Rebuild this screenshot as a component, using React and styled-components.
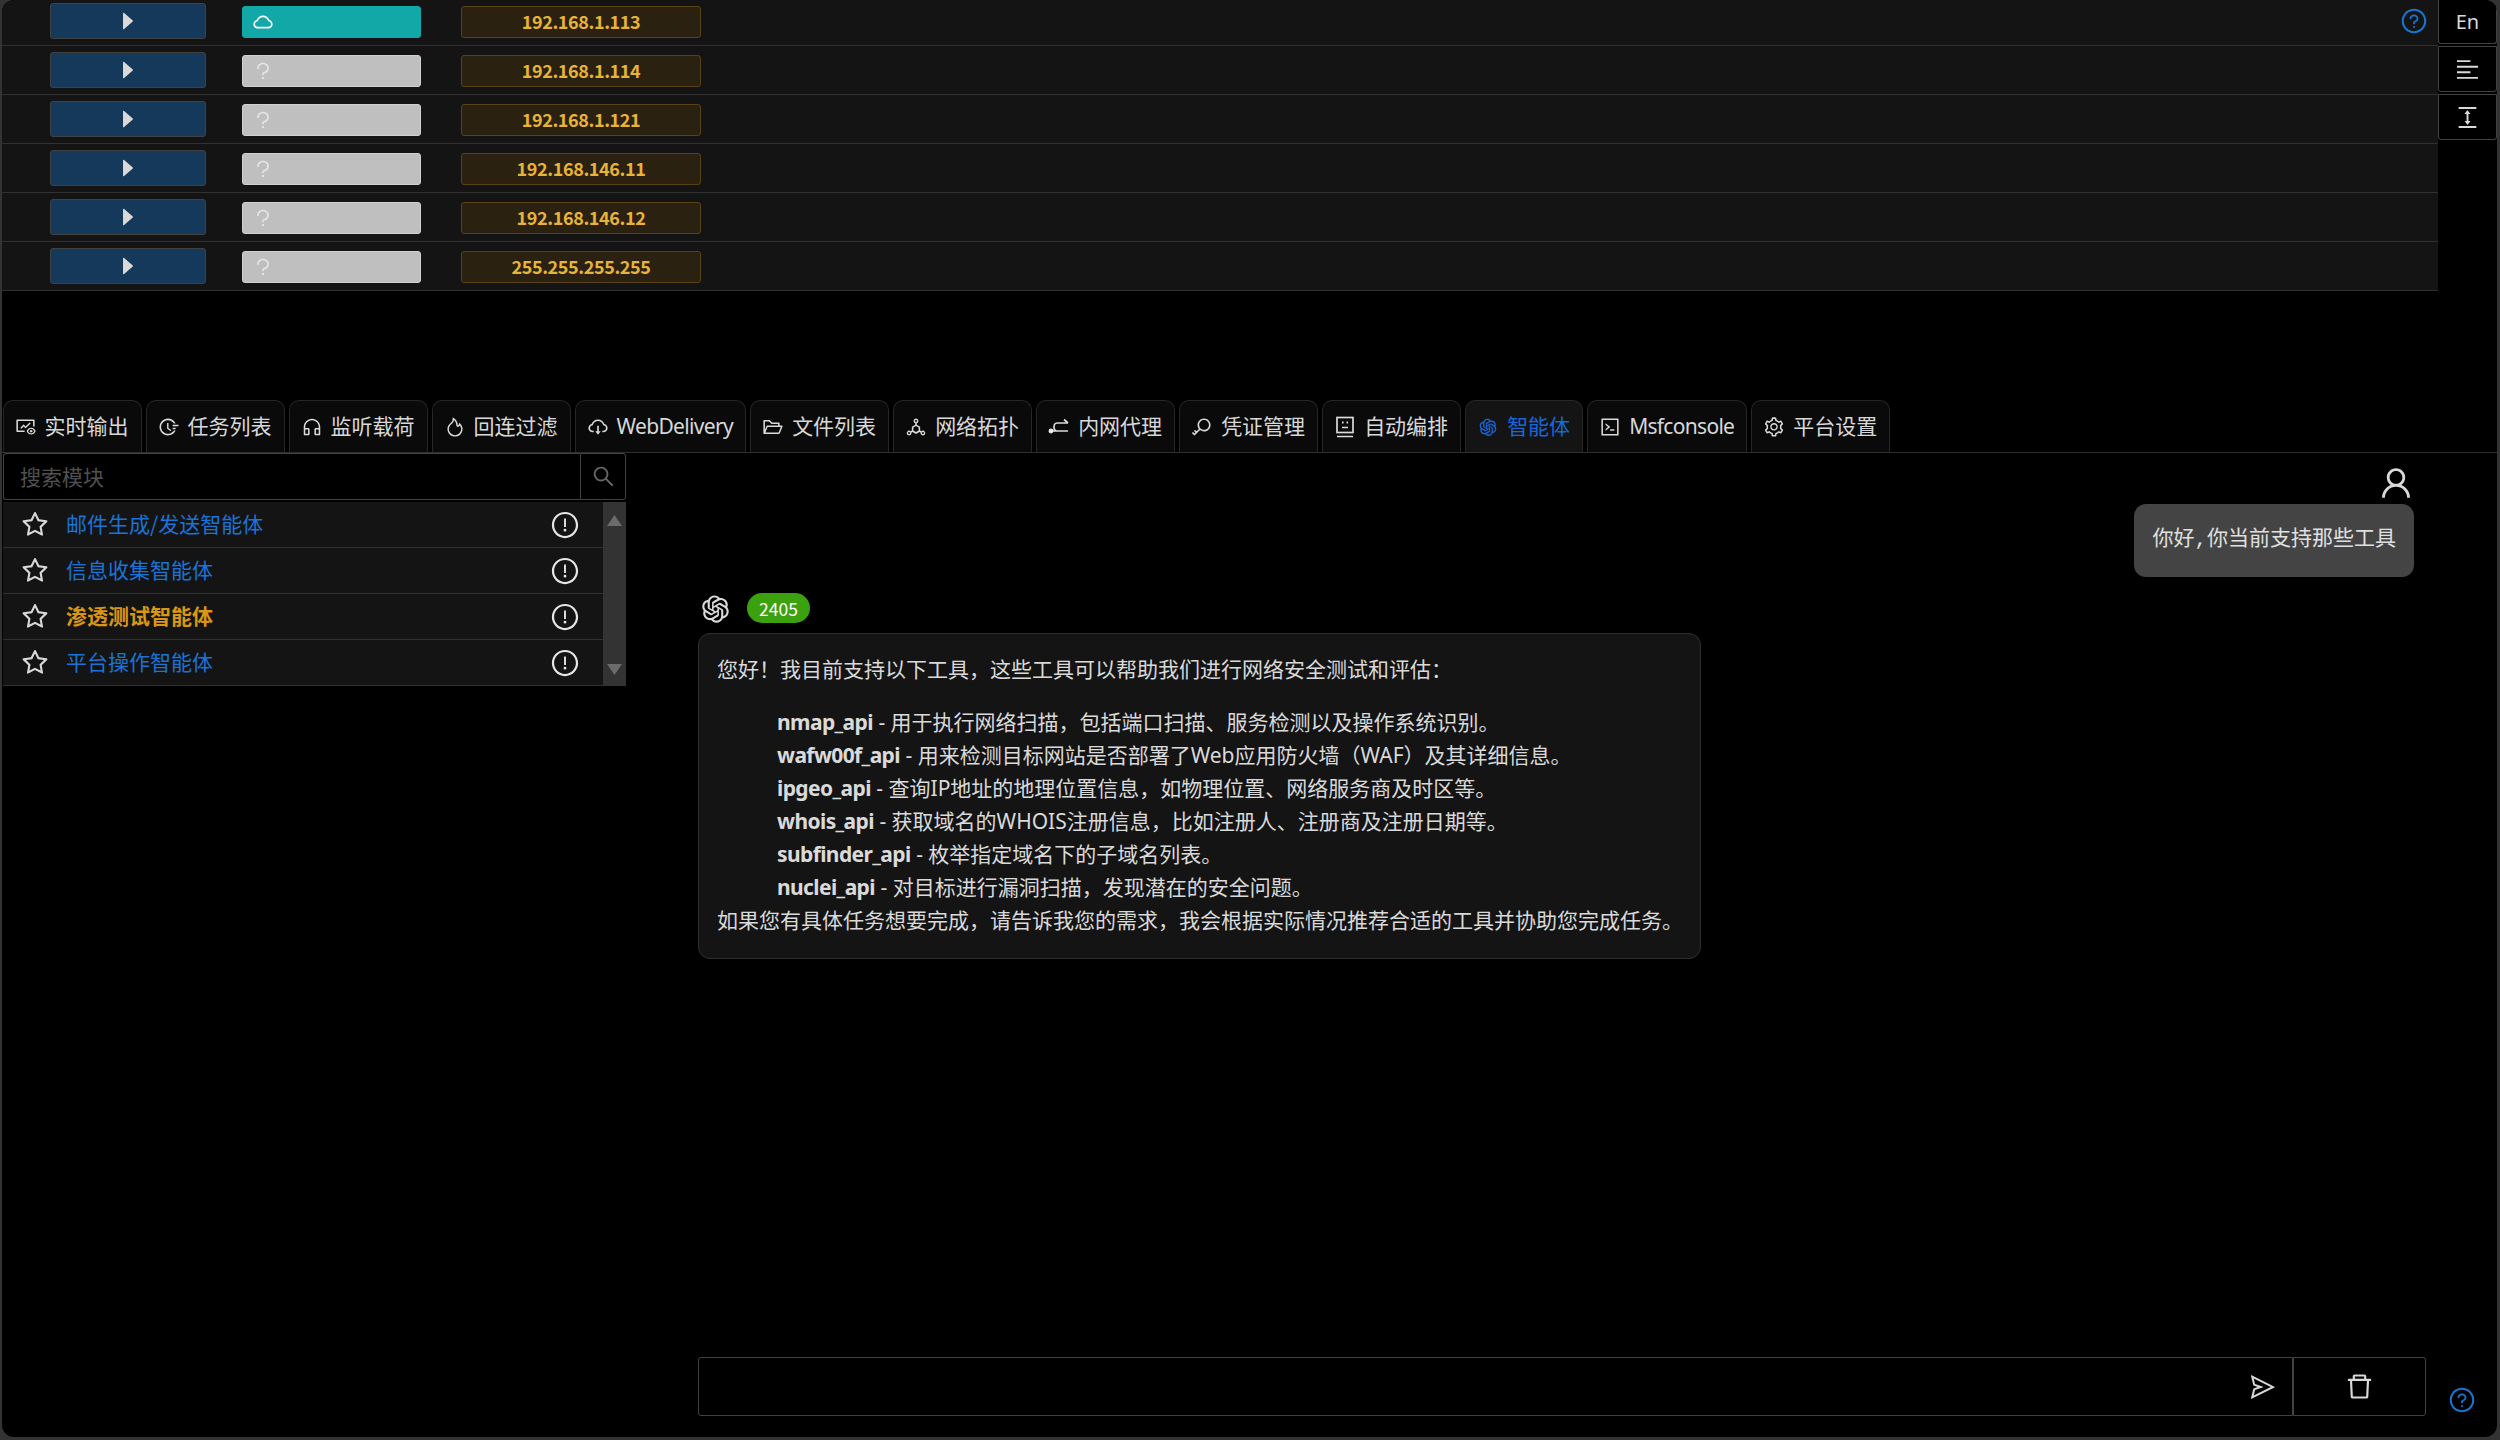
import React from "react";
import styled, { createGlobalStyle } from "styled-components";
import {
  AiOutlineFundView, AiOutlineFieldTime, AiOutlineCustomerService, AiOutlineFire,
  AiOutlineCloudDownload, AiOutlineFolderOpen, AiOutlineDeploymentUnit, AiOutlineKey,
  AiOutlineOpenAI, AiOutlineCode, AiOutlineSetting, AiOutlineAlignLeft, AiOutlineColumnHeight,
  AiOutlineUser, AiOutlineDelete, AiOutlineSend, AiOutlineQuestionCircle,
  AiOutlineExclamationCircle, AiOutlineStar, AiOutlineSearch, AiFillCaretRight,
  AiOutlineCloud, AiOutlineQuestion,
} from "react-icons/ai";

const FONT = `"Noto Sans", "Noto Sans CJK SC", sans-serif`;

const Global = createGlobalStyle`
  html, body { margin: 0; padding: 0; background: #333; height: 1440px; overflow: hidden; }
  * { box-sizing: border-box; }
`;

const Frame = styled.div`
  width: 2500px; height: 1440px; background: #333;
  padding: 0 3px 3px 2px; font-family: ${FONT}; color: rgba(255,255,255,.85);
`;
const Window = styled.div`
  width: 100%; height: 100%; background: #000; border-radius: 12px; overflow: hidden;
  display: flex; flex-direction: column;
`;
const Top = styled.div`
  height: 400px; flex: none; display: flex; align-items: flex-start; overflow: hidden;
`;
const HostTable = styled.div`
  width: 2436px; flex: none; margin-top: -3px;
`;
const HostRow = styled.div`
  height: 49px; display: flex; align-items: center; background: #141414;
  border-bottom: 1px solid #303030;
`;
const ExpandButton = styled.div`
  width: 156px; height: 36px; margin-left: 48px; flex: none;
  display: flex; align-items: center; justify-content: center;
  background: #15395b; border: 1px solid #424242; border-radius: 3px; color: #d9d9d9; font-size: 24px;
`;
const StatusTag = styled.div`
  width: 179px; height: 32px; margin: 1px 0 0 36px; flex: none; display: flex; align-items: center;
  padding-left: 9px; border-radius: 3px; font-size: 22px;
  background: ${p => (p.$online ? "#13a8a8" : "#bfbfbf")};
  color: ${p => (p.$online ? "#fff" : "#e6e6e6")};
  border: 1px solid ${p => (p.$online ? "#13a8a8" : "#d0d0d0")};
`;
const IpTag = styled.div`
  width: 240px; height: 32px; margin: 1px 0 0 40px; padding-bottom: 2px; flex: none; display: flex; align-items: center;
  justify-content: center; background: #2b2111; border: 1px solid #594214; border-radius: 3px;
  color: #e8b339; font-size: 18px; font-weight: 700; letter-spacing: -0.4px;
  font-family: "Noto Sans CJK SC", sans-serif;
`;
const HelpIcon = styled.span`
  display: flex; color: #1677d2; font-size: ${p => p.$size || 28}px;
`;
const TopHelp = styled(HelpIcon)`
  margin-left: auto; margin-right: 10px;
`;
const SideColumn = styled.div`
  width: 59px; flex: none; display: flex; flex-direction: column; gap: 2px;
`;
const SideButton = styled.div`
  height: ${p => p.$h}px; display: flex; align-items: center; justify-content: center;
  background: #000; border: 1px solid #424242; border-top: ${p => (p.$first ? "none" : "1px solid #424242")};
  border-radius: 0 0 3px 3px; color: #d9d9d9; font-size: 27px;
`;
const LangText = styled.span`
  font-size: 20px; font-family: "Noto Sans", sans-serif;
`;
const TabBar = styled.div`
  height: 53px; flex: none; display: flex; gap: 4px; padding-left: 0.5px; border-bottom: 1px solid #303030;
`;
const Tab = styled.div`
  height: 52px; display: flex; align-items: center; gap: 8px; padding: 0 12px 0 11px;
  background: ${p => (p.$active ? "#141414" : "#0a0a0a")};
  border: 1px solid #262626; border-bottom: none; border-radius: 10px 10px 0 0;
  font-size: 21px; line-height: 33px; white-space: nowrap;
  letter-spacing: ${p => p.$tracking || 0}px;
  color: ${p => (p.$active ? "#1668dc" : "rgba(255,255,255,.85)")};
  svg { font-size: 22px; flex: none; }
`;
const Body = styled.div`
  flex: 1; min-height: 0; display: flex;
`;
const Sidebar = styled.div`
  width: 624px; flex: none; padding-left: 1px;
`;
const SearchBar = styled.div`
  height: 47px; display: flex;
`;
const SearchInput = styled.input`
  flex: 1; min-width: 0; height: 47px; background: #000; border: 1px solid #424242; border-right: none;
  border-radius: 3px 0 0 3px; padding: 0 16px 2px; outline: none; color: #fff;
  font-family: "Noto Sans CJK SC", sans-serif; font-size: 21px;
  &::placeholder { color: #505050; opacity: 1; }
`;
const SearchButton = styled.div`
  width: 46px; height: 47px; flex: none; display: flex; align-items: center; justify-content: center;
  border: 1px solid #424242; border-radius: 0 3px 3px 0; color: #666; font-size: 25px;
`;
const ModuleList = styled.div`
  margin-top: 2px; display: flex; height: 184px; background: #141414;
`;
const ModuleRows = styled.div`
  flex: 1; min-width: 0;
`;
const ModuleRow = styled.div`
  height: 46px; display: flex; align-items: center; padding: 0 23px 0 17px;
  border-bottom: 1px solid #303030;
`;
const StarIcon = styled.span`
  display: flex; font-size: 30px; color: #d9d9d9;
`;
const ModuleName = styled.span`
  margin-left: 16px; padding-bottom: 3px; flex: 1; font-size: 21px; font-family: "Noto Sans CJK SC", sans-serif;
  font-weight: ${p => (p.$hot ? 700 : 400)};
  color: ${p => (p.$hot ? "#d89614" : "#1a73d6")};
`;
const InfoIcon = styled.span`
  display: flex; font-size: 30px; color: #e6e6e6;
`;
const ScrollTrack = styled.div`
  width: 23px; flex: none; background: #333; display: flex; flex-direction: column;
  justify-content: space-between; align-items: center; padding: 13px 0 11px;
`;
const Chat = styled.div`
  flex: 1; min-width: 0; padding: 0 0 21px 72px; display: flex; flex-direction: column;
`;
const UserMessage = styled.div`
  margin-top: 11px; padding-right: 83px; display: flex; flex-direction: column; align-items: flex-end;
`;
const UserAvatar = styled.span`
  display: flex; font-size: 38px; height: 40px; margin-right: -1px; color: #d9d9d9;
`;
const UserBubble = styled.div`
  height: 73px; padding: 19px 18px; background: #444; border-radius: 12px;
  font-family: "Liberation Mono", "Noto Sans CJK SC", monospace; font-size: 21px; line-height: 33px;
  color: #e0e0e0; white-space: nowrap;
`;
const BotHeader = styled.div`
  margin-top: 15px; display: flex; align-items: center; gap: 14px; height: 32px;
`;
const BotLogo = styled.span`
  display: flex; font-size: 35px; color: #d9d9d9;
`;
const CountBadge = styled.span`
  width: 63px; height: 30px; display: flex; align-items: center; justify-content: center;
  background: #3ba10f; border-radius: 15px; color: #fff; font-size: 17.5px;
  font-family: "Noto Sans CJK SC", sans-serif;
`;
const Card = styled.div`
  width: 1003px; margin-top: 9px; padding: 19px 18px 21px; background: #141414; border: 1px solid #303030;
  border-radius: 12px; font-size: 21px; line-height: 33px; white-space: nowrap;
`;
const Paragraph = styled.div``;
const ToolList = styled.ul`
  list-style: none; margin: 20px 0 0; padding: 0 0 0 60px;
`;
const ToolName = styled.strong`
  font-weight: 700; letter-spacing: -0.6px;
`;
const Composer = styled.div`
  margin-top: auto; display: flex; height: 59px;
`;
const ComposerInput = styled.div`
  flex: 1; min-width: 0; display: flex; align-items: center; justify-content: flex-end; padding-right: 15px;
  border: 1px solid #424242; border-radius: 3px 0 0 3px; color: #d9d9d9; font-size: 28px;
`;
const ClearButton = styled.div`
  width: 133px; flex: none; display: flex; align-items: center; justify-content: center;
  border: 1px solid #424242; border-radius: 0 3px 3px 0; color: #d9d9d9; font-size: 31px;
`;
const BottomHelp = styled(HelpIcon)`
  align-self: flex-end; margin: 0 21px 2px 22px;
`;

const ProxyIcon = () => (
  <svg width="1em" height="1em" viewBox="0 0 22 22" fill="none" stroke="currentColor" strokeWidth="1.7">
    <path d="M9 7h11M16 3.5 20 7M3 15h17M9 7c-2 0-3 2-3 4s1 4 3 4" />
    <circle cx="3" cy="15" r="1.6" fill="currentColor" />
  </svg>
);
const BoardIcon = () => (
  <svg width="1em" height="1em" viewBox="0 0 22 22" fill="none" stroke="currentColor" strokeWidth="1.7">
    <rect x="3" y="1.5" width="16" height="15" />
    <path d="M3 20.5h16M8 11.5h6" />
    <path d="M8 6.5h1.6M12.5 6.5h1.6" strokeWidth="2" />
  </svg>
);
const ArrowUp = () => (
  <svg width="15" height="11" viewBox="0 0 15 11"><polygon points="7.5,0 15,11 0,11" fill="#6b6b6b" /></svg>
);
const ArrowDown = () => (
  <svg width="15" height="11" viewBox="0 0 15 11"><polygon points="0,0 15,0 7.5,11" fill="#6b6b6b" /></svg>
);

const hosts = ["192.168.1.113", "192.168.1.114", "192.168.1.121", "192.168.146.11", "192.168.146.12", "255.255.255.255"];
const tabs = [
  { Icon: AiOutlineFundView, label: "实时输出" }, { Icon: AiOutlineFieldTime, label: "任务列表" },
  { Icon: AiOutlineCustomerService, label: "监听载荷" }, { Icon: AiOutlineFire, label: "回连过滤" },
  { Icon: AiOutlineCloudDownload, label: "WebDelivery", tracking: -0.65 }, { Icon: AiOutlineFolderOpen, label: "文件列表" },
  { Icon: AiOutlineDeploymentUnit, label: "网络拓扑" }, { Icon: ProxyIcon, label: "内网代理" },
  { Icon: AiOutlineKey, label: "凭证管理" }, { Icon: BoardIcon, label: "自动编排" },
  { Icon: AiOutlineOpenAI, label: "智能体", active: true }, { Icon: AiOutlineCode, label: "Msfconsole", tracking: -0.7 },
  { Icon: AiOutlineSetting, label: "平台设置" },
];
const modules = [["邮件生成/发送智能体"], ["信息收集智能体"], ["渗透测试智能体", true], ["平台操作智能体"]];

// Full-width CJK punctuation, written as escapes so it stays distinct from the ASCII forms.
const C = "\uFF0C";
const E = "\uFF01";
const K = "\uFF1A";
const LP = "\uFF08";
const RP = "\uFF09";

const intro = `您好${E}我目前支持以下工具${C}这些工具可以帮助我们进行网络安全测试和评估${K}`;
const outro = `如果您有具体任务想要完成${C}请告诉我您的需求${C}我会根据实际情况推荐合适的工具并协助您完成任务。`;
const tools = [
  ["nmap_api", ` - 用于执行网络扫描${C}包括端口扫描、服务检测以及操作系统识别。`],
  ["wafw00f_api", ` - 用来检测目标网站是否部署了Web应用防火墙${LP}WAF${RP}及其详细信息。`],
  ["ipgeo_api", ` - 查询IP地址的地理位置信息${C}如物理位置、网络服务商及时区等。`],
  ["whois_api", ` - 获取域名的WHOIS注册信息${C}比如注册人、注册商及注册日期等。`],
  ["subfinder_api", " - 枚举指定域名下的子域名列表。"],
  ["nuclei_api", ` - 对目标进行漏洞扫描${C}发现潜在的安全问题。`],
];

export default function App() {
  return (
    <Frame>
      <Global />
      <Window>
        <Top>
          <HostTable>
            {hosts.map((ip, i) => (
              <HostRow key={ip}>
                <ExpandButton><AiFillCaretRight /></ExpandButton>
                <StatusTag $online={i === 0}>{i === 0 ? <AiOutlineCloud /> : <AiOutlineQuestion />}</StatusTag>
                <IpTag>{ip}</IpTag>
                {i === 0 && <TopHelp><AiOutlineQuestionCircle /></TopHelp>}
              </HostRow>
            ))}
          </HostTable>
          <SideColumn>
            <SideButton $h={44} $first><LangText>En</LangText></SideButton>
            <SideButton $h={46}><AiOutlineAlignLeft /></SideButton>
            <SideButton $h={46}><AiOutlineColumnHeight /></SideButton>
          </SideColumn>
        </Top>
        <TabBar>
          {tabs.map(({ Icon, label, active, tracking }) => (
            <Tab key={label} $active={active} $tracking={tracking}><Icon />{label}</Tab>
          ))}
        </TabBar>
        <Body>
          <Sidebar>
            <SearchBar>
              <SearchInput placeholder="搜索模块" />
              <SearchButton><AiOutlineSearch /></SearchButton>
            </SearchBar>
            <ModuleList>
              <ModuleRows>
                {modules.map(([name, hot]) => (
                  <ModuleRow key={name}>
                    <StarIcon><AiOutlineStar /></StarIcon>
                    <ModuleName $hot={hot}>{name}</ModuleName>
                    <InfoIcon><AiOutlineExclamationCircle /></InfoIcon>
                  </ModuleRow>
                ))}
              </ModuleRows>
              <ScrollTrack><ArrowUp /><ArrowDown /></ScrollTrack>
            </ModuleList>
          </Sidebar>
          <Chat>
            <UserMessage>
              <UserAvatar><AiOutlineUser /></UserAvatar>
              <UserBubble>你好,你当前支持那些工具</UserBubble>
            </UserMessage>
            <BotHeader>
              <BotLogo><AiOutlineOpenAI /></BotLogo>
              <CountBadge>2405</CountBadge>
            </BotHeader>
            <Card>
              <Paragraph>{intro}</Paragraph>
              <ToolList>
                {tools.map(([name, desc]) => (
                  <li key={name}><ToolName>{name}</ToolName>{desc}</li>
                ))}
              </ToolList>
              <Paragraph>{outro}</Paragraph>
            </Card>
            <Composer>
              <ComposerInput><AiOutlineSend /></ComposerInput>
              <ClearButton><AiOutlineDelete /></ClearButton>
              <BottomHelp><AiOutlineQuestionCircle /></BottomHelp>
            </Composer>
          </Chat>
        </Body>
      </Window>
    </Frame>
  );
}
